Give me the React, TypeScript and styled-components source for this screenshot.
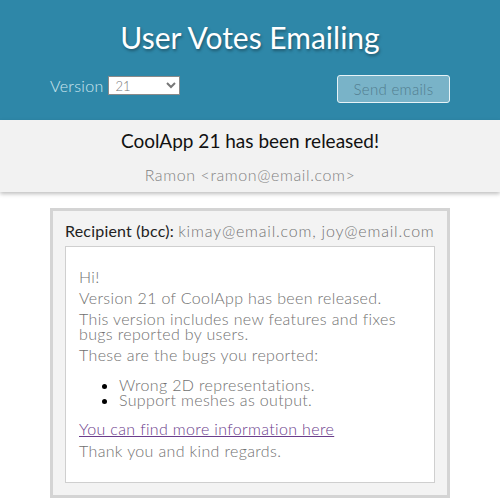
import styled, { createGlobalStyle } from "styled-components";

const GlobalStyle = createGlobalStyle`
    html, body {
        margin: 0;
        padding: 0;
        background: #ffffff;
        font-family: "Lato", "Open Sans", sans-serif;
    }
`;

const Header = styled.header`
    background: #2e87a8;
    height: 120px;
    padding: 0 50px;
    box-sizing: border-box;
    display: flex;
    flex-direction: column;
`;

const Title = styled.h1`
    margin: 0;
    padding-top: 19px;
    height: 55px;
    box-sizing: border-box;
    text-align: center;
    font-size: 30px;
    font-weight: 400;
    color: #ffffff;
    text-shadow: 1px 2px 3px rgba(0, 0, 0, 0.35);
`;

const Controls = styled.div`
    margin-top: 20px;
    display: flex;
    justify-content: space-between;
    align-items: flex-start;
`;

const VersionPicker = styled.label`
    display: flex;
    align-items: center;
    gap: 5px;
    margin-top: 1px;
    color: #cfe7f0;
    font-size: 16px;
    font-weight: 300;
    letter-spacing: 0.3px;
`;

const Select = styled.select`
    width: 72px;
    height: 19px;
    padding: 0 2px;
    border: 1px solid #8a8a8a;
    border-radius: 0;
    background: #ffffff;
    color: #777777;
    font-family: "Lato", sans-serif;
    font-size: 13px;
    font-weight: 300;
`;

const SendButton = styled.button`
    width: 113px;
    height: 28px;
    background: #79b3c8;
    border: 1px solid #e6f3f7;
    border-radius: 3px;
    color: #527d8f;
    font-family: "Lato", sans-serif;
    font-size: 15px;
    font-weight: 300;
    letter-spacing: 0.3px;
    cursor: default;
`;

const Band = styled.section`
    background: #f2f2f2;
    height: 72px;
    box-shadow: 0 2px 4px rgba(0, 0, 0, 0.25);
    display: flex;
    flex-direction: column;
    align-items: center;
    padding-top: 9px;
    box-sizing: border-box;
`;

const Subject = styled.h2`
    margin: 0;
    font-size: 19px;
    font-weight: 400;
    color: #111111;
`;

const Sender = styled.div`
    margin-top: 13px;
    font-size: 16px;
    font-weight: 300;
    letter-spacing: 0.6px;
    color: #828282;
`;

const Card = styled.article`
    width: 400px;
    margin: 16px auto 0;
    box-sizing: border-box;
    background: #f3f3f3;
    border: 3px solid #d4d4d4;
    padding: 10px 12px 12px;
`;

const Recipients = styled.div`
    font-size: 16px;
    color: #222222;
    margin-bottom: 6px;
    letter-spacing: 0.2px;

    span {
        color: #747474;
        font-weight: 300;
        letter-spacing: 0.8px;
    }
`;

const Body = styled.div`
    background: #ffffff;
    border: 1px solid #cfcfcf;
    padding: 22px 13px 18px;
    color: #717171;
    font-size: 16px;
    font-weight: 300;
    line-height: 15px;
    letter-spacing: 0.35px;

    p {
        margin: 0 0 6px;
    }

    ul {
        margin: 15px 0 14px;
        padding-left: 40px;
    }

    li::marker {
        color: #000000;
    }

    a {
        color: #6b3d8c;
        display: block;
        margin-bottom: 7px;
    }
`;

export default function App() {
    return (
        <>
            <GlobalStyle />
            <Header>
                <Title>User Votes Emailing</Title>
                <Controls>
                    <VersionPicker>
                        Version
                        <Select defaultValue="21">
                            <option value="21">21</option>
                            <option value="20">20</option>
                        </Select>
                    </VersionPicker>
                    <SendButton>Send emails</SendButton>
                </Controls>
            </Header>
            <Band>
                <Subject>CoolApp 21 has been released!</Subject>
                <Sender>Ramon &lt;ramon@email.com&gt;</Sender>
            </Band>
            <Card>
                <Recipients>
                    Recipient (bcc): <span>kimay@email.com, joy@email.com</span>
                </Recipients>
                <Body>
                    <p>Hi!</p>
                    <p>Version 21 of CoolApp has been released.</p>
                    <p>This version includes new features and fixes bugs reported by users.</p>
                    <p>These are the bugs you reported:</p>
                    <ul>
                        <li>Wrong 2D representations.</li>
                        <li>Support meshes as output.</li>
                    </ul>
                    <a href="#">You can find more information here</a>
                    <p>Thank you and kind regards.</p>
                </Body>
            </Card>
        </>
    );
}
